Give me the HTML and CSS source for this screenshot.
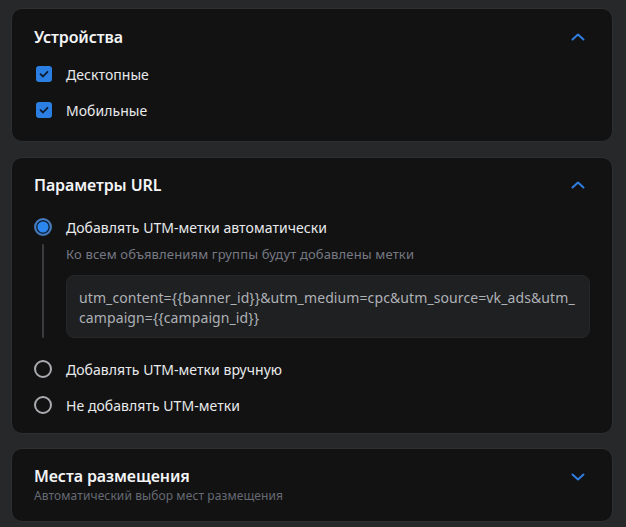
FILE: index.html
```html
<!DOCTYPE html>
<html lang="ru">
<head>
<meta charset="utf-8">
<link rel="stylesheet" href="styles.css">
</head>
<body>
<div class="page">
  <section class="card card-devices">
    <div class="card-head">
      <h2 class="title">Устройства</h2>
      <svg class="chevron" width="16" height="10" viewBox="0 0 16 10"><path d="M2.5 7.5 L8 2.5 L13.5 7.5" fill="none" stroke="#2f7ee0" stroke-width="2" stroke-linecap="round" stroke-linejoin="round"/></svg>
    </div>
    <div class="checks">
      <label class="check">
        <span class="box"><svg width="12" height="10" viewBox="0 0 12 10"><path d="M2.5 5.2 L5 7.5 L9.5 2.8" fill="none" stroke="#0f1a2b" stroke-width="1.8" stroke-linecap="round" stroke-linejoin="round"/></svg></span>
        <span class="label">Десктопные</span>
      </label>
      <label class="check">
        <span class="box"><svg width="12" height="10" viewBox="0 0 12 10"><path d="M2.5 5.2 L5 7.5 L9.5 2.8" fill="none" stroke="#0f1a2b" stroke-width="1.8" stroke-linecap="round" stroke-linejoin="round"/></svg></span>
        <span class="label">Мобильные</span>
      </label>
    </div>
  </section>

  <section class="card card-url">
    <div class="card-head">
      <h2 class="title">Параметры URL</h2>
      <svg class="chevron" width="16" height="10" viewBox="0 0 16 10"><path d="M2.5 7.5 L8 2.5 L13.5 7.5" fill="none" stroke="#2f7ee0" stroke-width="2" stroke-linecap="round" stroke-linejoin="round"/></svg>
    </div>
    <div class="radios">
      <div class="radio-group">
        <label class="radio">
          <span class="dot dot-on"></span>
          <span class="label">Добавлять UTM-метки автоматически</span>
        </label>
        <div class="nested">
          <div class="rail"></div>
          <div class="nested-body">
            <p class="hint">Ко всем объявлениям группы будут добавлены метки</p>
            <div class="code">utm_content={{banner_id}}&amp;utm_medium=cpc&amp;utm_source=vk_ads&amp;utm_<br>campaign={{campaign_id}}</div>
          </div>
        </div>
      </div>
      <label class="radio">
        <span class="dot"></span>
        <span class="label">Добавлять UTM-метки вручную</span>
      </label>
      <label class="radio">
        <span class="dot"></span>
        <span class="label">Не добавлять UTM-метки</span>
      </label>
    </div>
  </section>

  <section class="card card-places">
    <div class="card-head head-top">
      <div>
        <h2 class="title">Места размещения</h2>
        <p class="sub">Автоматический выбор мест размещения</p>
      </div>
      <svg class="chevron chevron-down" width="16" height="10" viewBox="0 0 16 10"><path d="M2.5 2.5 L8 7.5 L13.5 2.5" fill="none" stroke="#2f7ee0" stroke-width="2" stroke-linecap="round" stroke-linejoin="round"/></svg>
    </div>
  </section>
</div>
</body>
</html>
```

FILE: styles.css
```css
* { box-sizing: border-box; }
html, body { margin: 0; padding: 0; }
body {
  background: #27282a;
  font-family: "Noto Sans", "Open Sans", sans-serif;
  color: #e9eaec;
  width: 626px;
  height: 527px;
  overflow: hidden;
}
.page {
  padding: 8px 13px 0 11px;
  display: flex;
  flex-direction: column;
}
.card {
  background: #121213;
  border: 1px solid #2e2f31;
  border-radius: 11px;
  padding: 0 22px 0 22px;
}
.card-head {
  display: flex;
  justify-content: space-between;
  align-items: center;
}
.head-top { align-items: flex-start; }
.chevron { display: block; margin-right: 4px; }
.chevron-down { margin-top: 7px; }
.title {
  margin: 0;
  font-size: 16px;
  font-weight: 600;
  color: #f4f5f6;
  line-height: 22px;
  letter-spacing: -0.1px;
}
.card-devices { height: 134px; padding-top: 17px; }
.card-url { height: 277px; padding-top: 16px; margin-top: 15px; }
.card-places { height: 74px; padding-top: 16px; margin-top: 14px; }

.checks { display: flex; flex-direction: column; gap: 14px; margin-top: 15px; }
.check, .radio { display: flex; align-items: center; height: 22px; }
.box {
  width: 16px; height: 16px;
  margin-left: 2px;
  border-radius: 3px;
  background: #2b7fe3;
  display: flex; align-items: center; justify-content: center;
}
.label {
  margin-left: 14px;
  font-size: 14px;
  color: #e9eaec;
  letter-spacing: 0.05px;
}

.radios { display: flex; flex-direction: column; gap: 14px; margin-top: 20px; }
.dot {
  width: 18px; height: 18px;
  border-radius: 50%;
  border: 2px solid #a9abaf;
  flex: none;
}
.dot-on {
  border: 2px solid #4679b8;
  background: #2b86f0;
  box-shadow: inset 0 0 0 1.5px #12223a;
}
.nested { display: flex; margin-top: 6px; margin-bottom: 6px; }
.rail {
  width: 2px;
  background: #3a3b3e;
  margin-left: 8px;
  margin-right: 22px;
  border-radius: 1px;
}
.nested-body { flex: 1; }
.hint {
  margin: 0;
  font-size: 13px;
  line-height: 20px;
  color: #767982;
  letter-spacing: 0.15px;
}
.code {
  margin-top: 11px;
  background: #1f2022;
  border: 1px solid #262729;
  border-radius: 8px;
  padding: 12px 12px 9px 12px;
  font-size: 14px;
  line-height: 20px;
  color: #aeb1b6;
  letter-spacing: 0.1px;
  width: 524px;
  white-space: nowrap;
}
.sub {
  margin: 0;
  font-size: 12px;
  line-height: 17px;
  color: #666a72;
  letter-spacing: 0.1px;
}
```
